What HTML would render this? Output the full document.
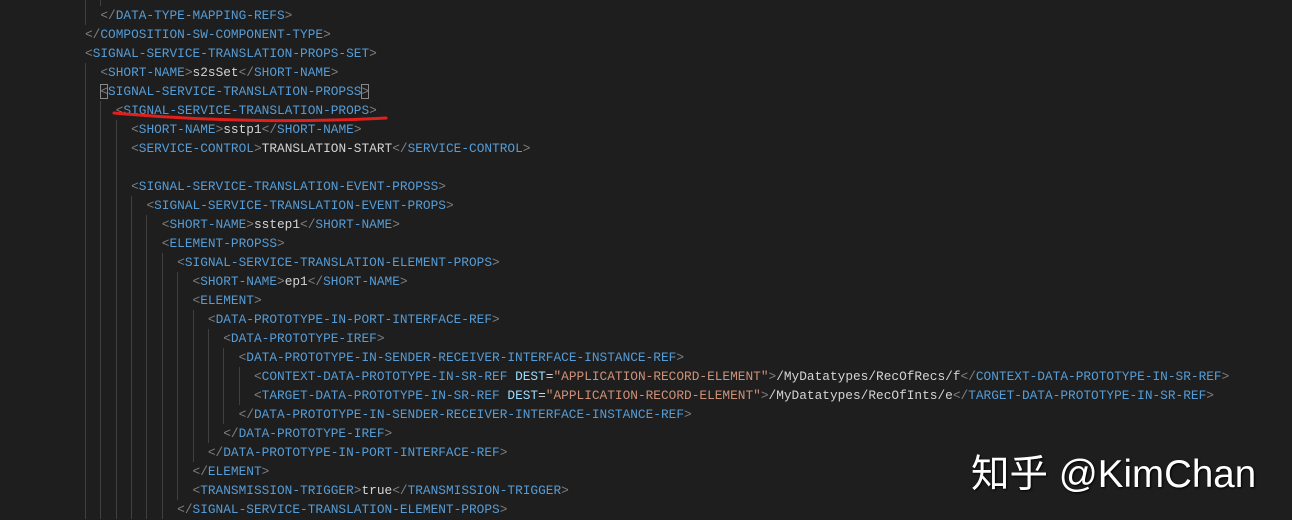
<!DOCTYPE html>
<html><head><meta charset="utf-8"><style>
body{margin:0;width:1292px;height:520px;background:#1e1e1e;overflow:hidden;position:relative}
#c{position:absolute;left:85px;top:-13px;font-family:"Liberation Mono",monospace;font-size:12.8px;line-height:19px;color:#d4d4d4}
.l{height:19px;white-space:pre}
.g{display:inline-block;width:15.36px;height:19px;vertical-align:top;box-shadow:inset 1px 0 #404040}
.t{color:#569cd6}.b{color:#808080}.a{color:#9cdcfe}.s{color:#ce9178}
.hb{outline:1px solid #888;outline-offset:-1px}
#w{position:absolute;left:971px;top:443px;font-family:"Liberation Sans","Noto Sans CJK SC",sans-serif;font-size:38.5px;color:#fff;text-shadow:1px 1px 2px #000}
</style></head><body>
<div id="c"><div class="l"><span class="g"></span><span class="g"></span><span class="b">&lt;</span><span class="t">DATA-TYPE-MAPPING-REF</span> <span class="a">DEST</span>=<span class="s">"DATA-TYPE-MAPPING-SET"</span><span class="b">&gt;</span>/Interfaces/Dams<span class="b">&lt;/</span><span class="t">DATA-TYPE-MAPPING-REF</span><span class="b">&gt;</span></div><div class="l"><span class="g"></span><span class="b">&lt;/</span><span class="t">DATA-TYPE-MAPPING-REFS</span><span class="b">&gt;</span></div><div class="l"><span class="b">&lt;/</span><span class="t">COMPOSITION-SW-COMPONENT-TYPE</span><span class="b">&gt;</span></div><div class="l"><span class="b">&lt;</span><span class="t">SIGNAL-SERVICE-TRANSLATION-PROPS-SET</span><span class="b">&gt;</span></div><div class="l"><span class="g"></span><span class="b">&lt;</span><span class="t">SHORT-NAME</span><span class="b">&gt;</span>s2sSet<span class="b">&lt;/</span><span class="t">SHORT-NAME</span><span class="b">&gt;</span></div><div class="l"><span class="g"></span><span class="b hb">&lt;</span><span class="t">SIGNAL-SERVICE-TRANSLATION-PROPSS</span><span class="b hb">&gt;</span></div><div class="l"><span class="g"></span><span class="g"></span><span class="b">&lt;</span><span class="t">SIGNAL-SERVICE-TRANSLATION-PROPS</span><span class="b">&gt;</span></div><div class="l"><span class="g"></span><span class="g"></span><span class="g"></span><span class="b">&lt;</span><span class="t">SHORT-NAME</span><span class="b">&gt;</span>sstp1<span class="b">&lt;/</span><span class="t">SHORT-NAME</span><span class="b">&gt;</span></div><div class="l"><span class="g"></span><span class="g"></span><span class="g"></span><span class="b">&lt;</span><span class="t">SERVICE-CONTROL</span><span class="b">&gt;</span>TRANSLATION-START<span class="b">&lt;/</span><span class="t">SERVICE-CONTROL</span><span class="b">&gt;</span></div><div class="l"><span class="g"></span><span class="g"></span><span class="g"></span></div><div class="l"><span class="g"></span><span class="g"></span><span class="g"></span><span class="b">&lt;</span><span class="t">SIGNAL-SERVICE-TRANSLATION-EVENT-PROPSS</span><span class="b">&gt;</span></div><div class="l"><span class="g"></span><span class="g"></span><span class="g"></span><span class="g"></span><span class="b">&lt;</span><span class="t">SIGNAL-SERVICE-TRANSLATION-EVENT-PROPS</span><span class="b">&gt;</span></div><div class="l"><span class="g"></span><span class="g"></span><span class="g"></span><span class="g"></span><span class="g"></span><span class="b">&lt;</span><span class="t">SHORT-NAME</span><span class="b">&gt;</span>sstep1<span class="b">&lt;/</span><span class="t">SHORT-NAME</span><span class="b">&gt;</span></div><div class="l"><span class="g"></span><span class="g"></span><span class="g"></span><span class="g"></span><span class="g"></span><span class="b">&lt;</span><span class="t">ELEMENT-PROPSS</span><span class="b">&gt;</span></div><div class="l"><span class="g"></span><span class="g"></span><span class="g"></span><span class="g"></span><span class="g"></span><span class="g"></span><span class="b">&lt;</span><span class="t">SIGNAL-SERVICE-TRANSLATION-ELEMENT-PROPS</span><span class="b">&gt;</span></div><div class="l"><span class="g"></span><span class="g"></span><span class="g"></span><span class="g"></span><span class="g"></span><span class="g"></span><span class="g"></span><span class="b">&lt;</span><span class="t">SHORT-NAME</span><span class="b">&gt;</span>ep1<span class="b">&lt;/</span><span class="t">SHORT-NAME</span><span class="b">&gt;</span></div><div class="l"><span class="g"></span><span class="g"></span><span class="g"></span><span class="g"></span><span class="g"></span><span class="g"></span><span class="g"></span><span class="b">&lt;</span><span class="t">ELEMENT</span><span class="b">&gt;</span></div><div class="l"><span class="g"></span><span class="g"></span><span class="g"></span><span class="g"></span><span class="g"></span><span class="g"></span><span class="g"></span><span class="g"></span><span class="b">&lt;</span><span class="t">DATA-PROTOTYPE-IN-PORT-INTERFACE-REF</span><span class="b">&gt;</span></div><div class="l"><span class="g"></span><span class="g"></span><span class="g"></span><span class="g"></span><span class="g"></span><span class="g"></span><span class="g"></span><span class="g"></span><span class="g"></span><span class="b">&lt;</span><span class="t">DATA-PROTOTYPE-IREF</span><span class="b">&gt;</span></div><div class="l"><span class="g"></span><span class="g"></span><span class="g"></span><span class="g"></span><span class="g"></span><span class="g"></span><span class="g"></span><span class="g"></span><span class="g"></span><span class="g"></span><span class="b">&lt;</span><span class="t">DATA-PROTOTYPE-IN-SENDER-RECEIVER-INTERFACE-INSTANCE-REF</span><span class="b">&gt;</span></div><div class="l"><span class="g"></span><span class="g"></span><span class="g"></span><span class="g"></span><span class="g"></span><span class="g"></span><span class="g"></span><span class="g"></span><span class="g"></span><span class="g"></span><span class="g"></span><span class="b">&lt;</span><span class="t">CONTEXT-DATA-PROTOTYPE-IN-SR-REF</span> <span class="a">DEST</span>=<span class="s">"APPLICATION-RECORD-ELEMENT"</span><span class="b">&gt;</span>/MyDatatypes/RecOfRecs/f<span class="b">&lt;/</span><span class="t">CONTEXT-DATA-PROTOTYPE-IN-SR-REF</span><span class="b">&gt;</span></div><div class="l"><span class="g"></span><span class="g"></span><span class="g"></span><span class="g"></span><span class="g"></span><span class="g"></span><span class="g"></span><span class="g"></span><span class="g"></span><span class="g"></span><span class="g"></span><span class="b">&lt;</span><span class="t">TARGET-DATA-PROTOTYPE-IN-SR-REF</span> <span class="a">DEST</span>=<span class="s">"APPLICATION-RECORD-ELEMENT"</span><span class="b">&gt;</span>/MyDatatypes/RecOfInts/e<span class="b">&lt;/</span><span class="t">TARGET-DATA-PROTOTYPE-IN-SR-REF</span><span class="b">&gt;</span></div><div class="l"><span class="g"></span><span class="g"></span><span class="g"></span><span class="g"></span><span class="g"></span><span class="g"></span><span class="g"></span><span class="g"></span><span class="g"></span><span class="g"></span><span class="b">&lt;/</span><span class="t">DATA-PROTOTYPE-IN-SENDER-RECEIVER-INTERFACE-INSTANCE-REF</span><span class="b">&gt;</span></div><div class="l"><span class="g"></span><span class="g"></span><span class="g"></span><span class="g"></span><span class="g"></span><span class="g"></span><span class="g"></span><span class="g"></span><span class="g"></span><span class="b">&lt;/</span><span class="t">DATA-PROTOTYPE-IREF</span><span class="b">&gt;</span></div><div class="l"><span class="g"></span><span class="g"></span><span class="g"></span><span class="g"></span><span class="g"></span><span class="g"></span><span class="g"></span><span class="g"></span><span class="b">&lt;/</span><span class="t">DATA-PROTOTYPE-IN-PORT-INTERFACE-REF</span><span class="b">&gt;</span></div><div class="l"><span class="g"></span><span class="g"></span><span class="g"></span><span class="g"></span><span class="g"></span><span class="g"></span><span class="g"></span><span class="b">&lt;/</span><span class="t">ELEMENT</span><span class="b">&gt;</span></div><div class="l"><span class="g"></span><span class="g"></span><span class="g"></span><span class="g"></span><span class="g"></span><span class="g"></span><span class="g"></span><span class="b">&lt;</span><span class="t">TRANSMISSION-TRIGGER</span><span class="b">&gt;</span>true<span class="b">&lt;/</span><span class="t">TRANSMISSION-TRIGGER</span><span class="b">&gt;</span></div><div class="l"><span class="g"></span><span class="g"></span><span class="g"></span><span class="g"></span><span class="g"></span><span class="g"></span><span class="b">&lt;/</span><span class="t">SIGNAL-SERVICE-TRANSLATION-ELEMENT-PROPS</span><span class="b">&gt;</span></div></div>
<svg style="position:absolute;left:0;top:0" width="1292" height="520"><path d="M114 113 Q250 125 386 118" stroke="#e0201c" stroke-width="3" fill="none" stroke-linecap="round"/></svg>
<div id="w">知乎 @KimChan</div>
</body></html>
